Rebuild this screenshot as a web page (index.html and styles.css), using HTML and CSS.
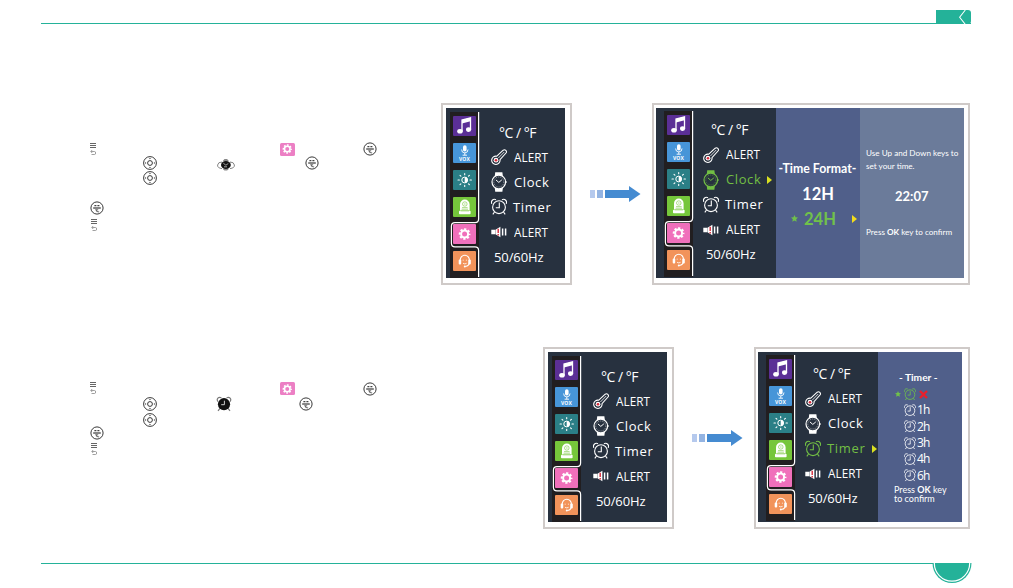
FILE: index.html
```html
<!DOCTYPE html>
<html lang="en">
<head>
  <meta charset="UTF-8" />
  <meta name="viewport" content="width=device-width, initial-scale=1.0" />
  <title>Clock and Timer</title>
  <link rel="stylesheet" href="styles.css">
</head>
<body>
  <!-- shared icons -->
  <svg class="defs">
    <symbol id="music" viewBox="0 0 23 20">
      <path d="M9 15V4l8.5-2.2v11.4" fill="none" stroke="#fff" stroke-width="1.3"/>
      <path d="M9 4l8.5-2.2v3.4L9 7.4z" fill="#fff"/>
      <ellipse cx="7" cy="15.3" rx="2.8" ry="2.3" fill="#fff"/><ellipse cx="15.6" cy="13.6" rx="2.6" ry="2.3" fill="#fff"/>
    </symbol>
    <symbol id="mic" viewBox="0 0 23 20">
      <rect x="10" y="2.3" width="3.6" height="6.2" rx="1.8" fill="#fff"/>
      <path d="M8.6 6.5q0 3.4 3.2 3.4T15 6.5M11.8 10v2.2M9.6 12.2h4.4" fill="none" stroke="#fff" stroke-width=".9"/>
    </symbol>
    <symbol id="sun" viewBox="0 0 23 20">
      <circle cx="11.7" cy="10" r="2.9" fill="none" stroke="#fff"/><path d="M11.7 7.1a2.9 2.9 0 0 1 0 5.8z" fill="#fff"/>
      <path d="M11.7 3.6v1.2M11.7 15.2v1.2M5 10h1.4M17 10h1.4M7 5.3l.9.9M15.5 13.8l.9.9M7 14.7l.9-.9M15.5 6.2l.9-.9" stroke="#fff" stroke-width="1.1" stroke-linecap="round"/>
    </symbol>
    <symbol id="lamp" viewBox="0 0 23 20">
      <path d="M7 13.6V7.4a4.8 4.9 0 0 1 9.6 0v6.2z" fill="#fff"/><rect x="6" y="13.8" width="11.6" height="3.4" rx=".8" fill="#fff"/>
      <path d="M9.5 7a2.3 2.2 0 1 1 4.6 0 2.3 2.2 0 1 1-4.6 0M11 7h1.6M9 10.6h5.6M8.6 12.2h6.4M7.6 13.9h8.4" fill="none" stroke="#76c63b" stroke-width=".6"/>
    </symbol>
    <symbol id="gear" viewBox="0 0 23 20">
      <circle cx="11.6" cy="10" r="3.5" fill="none" stroke="#fff" stroke-width="2"/>
      <circle cx="11.6" cy="10" r="4.9" fill="none" stroke="#fff" stroke-width="1.9" stroke-dasharray="2.2 1.65" stroke-dashoffset="1.1"/>
    </symbol>
    <symbol id="headset" viewBox="0 0 23 20">
      <path d="M7.2 10V9a4.6 4.8 0 0 1 9.2 0v1.5q0 4.8-4.2 5" fill="none" stroke="#fff" stroke-width="1.1"/>
      <rect x="5.7" y="8.6" width="2.5" height="4.8" rx="1" fill="#fff"/><rect x="15.3" y="8.6" width="2.5" height="4.8" rx="1" fill="#fff"/>
      <path d="M10.2 8.7v1M13.4 8.7v1M10 12.3q1.8 1.2 3.6 0" fill="none" stroke="#fff" stroke-width=".8"/><circle cx="11.8" cy="15.6" r="1" fill="#fff"/>
    </symbol>
    <symbol id="thermo" viewBox="0 0 16 20">
      <path d="M5.8 9.2l6.4-6a2 2 0 0 1 2.8 2.8l-6 6.6a4.2 4.2 0 1 1-3.2-3.4z" fill="none" stroke="currentColor" stroke-width="1.1"/>
      <path d="M7.4 11l5.8-6" stroke="currentColor" stroke-width=".8"/>
      <circle cx="5" cy="13.2" r="2.4" fill="#fff"/><circle cx="5" cy="13.2" r="1.3" fill="#d62839"/>
    </symbol>
    <symbol id="watch" viewBox="0 0 16 20">
      <path d="M4.4 4l.4-3h6l.4 3M4.4 16l.4 3h6l.4-3M4.8 2.4h6M4.8 17.6h6" fill="none" stroke="currentColor" stroke-width="1.3"/>
      <circle cx="7.8" cy="10" r="6.8" fill="none" stroke="currentColor" stroke-width="1.2"/>
      <circle cx="7.8" cy="10" r="5" fill="none" stroke="currentColor" stroke-width=".5" stroke-dasharray="1 1"/>
      <path d="M4.9 7.9l2.9 2.5 3-2.5M14.6 10h1.4" fill="none" stroke="currentColor" stroke-width="1"/>
    </symbol>
    <symbol id="alarm" viewBox="0 0 16 20">
      <circle cx="8" cy="10.2" r="6.4" fill="none" stroke="currentColor" stroke-width="1.1"/>
      <path d="M8.3 5.6v5.2H4.8M3.5 15L1.8 17.4M12.5 15l1.7 2.4M.9 6.8C-.6 4.3 2.2 1.2 5 2.7M15.1 6.8c1.5-2.5-1.3-5.6-4.1-4.1" fill="none" stroke="currentColor" stroke-width="1.1"/>
    </symbol>
    <symbol id="speaker" viewBox="0 0 16 20">
      <path d="M.3 7.7h3.8v4.6H.3zM4.4 7.7l5-2.9v10.4l-5-2.9z" fill="#fff"/>
      <path d="M7.2 6.8v4.2M7.2 12v1.5" stroke="#d62839" stroke-width="1.4"/><path d="M11.6 6.6v6.8M14.6 6.6v6.8" stroke="#fff" stroke-width="1.5"/>
    </symbol>
    <symbol id="outline" viewBox="0 0 30 166">
      <path d="M28.6 0v107q0 3.6-3.6 3.6H5q-3.6 0-3.6 3.6v17q0 3.6 3.6 3.6h20q3.6 0 3.6 3.6V165" fill="none" stroke="#fff" stroke-width="1.2"/>
    </symbol>
    <symbol id="star" viewBox="0 0 10 10"><path d="M5 0l1.5 3.2 3.5.4-2.6 2.4.7 3.6L5 7.9 1.9 9.6 2.6 6 0 3.6l3.5-.4z" fill="#70c14a"/></symbol>
    <symbol id="arrow" viewBox="0 0 51 16">
      <path d="M0 4h5v8H0z" fill="#b5c9ed"/><path d="M7 4h6v8H7z" fill="#94b4e2"/><path d="M15 4h24V0l11.5 8L39 16v-4H15z" fill="#458bd1"/>
    </symbol>
    <symbol id="menukey" viewBox="0 0 7 13">
      <path d="M0 .5h6M0 2.5h6M0 4.5h6" stroke="#666" stroke-width="1"/>
      <path d="M1 8.5h3.6q1 0 1 1.5t-1 1.5H1.5M2.2 7L.8 8.5 2.2 10" fill="none" stroke="#888" stroke-width=".8"/>
    </symbol>
    <symbol id="okkey" viewBox="0 0 14 14">
      <circle cx="7" cy="7" r="6.1" fill="none" stroke="#222" stroke-width=".9"/>
      <path d="M3.2 7h7.6" stroke="#111" stroke-width="1"/>
      <path d="M4.4 4.6h2M7.4 4.6h2" fill="none" stroke="#444" stroke-width="1.4"/>
      <path d="M5.2 8.8h3M6.6 8.8v1.6l2.6.6" fill="none" stroke="#444" stroke-width=".8"/>
    </symbol>
    <symbol id="navkey" viewBox="0 0 14 14">
      <circle cx="7" cy="7" r="6.4" fill="none" stroke="#222" stroke-width=".9"/><circle cx="7" cy="7" r="2.4" fill="none" stroke="#222" stroke-width=".9"/>
      <path d="M6.2 2.9L7 2.1l.8.8M6.2 11.1l.8.8.8-.8M2.9 6.2L2.1 7l.8.8M11.1 6.2l.8.8-.8.8" fill="none" stroke="#444" stroke-width=".8"/>
    </symbol>
    <symbol id="watchkey" viewBox="0 0 18 12">
      <path d="M5 3Q1 3 .6 6T5 9.6M13 3q4 0 4.4 3T13 9.6" fill="none" stroke="#777" stroke-width=".9"/>
      <path d="M7.5 0h2.6l2 2.2H5.5zM5.5 9.8h6.6l-2 1.8H7.5z" fill="#888"/><ellipse cx="8.9" cy="6" rx="4.9" ry="4" fill="#111"/>
      <path d="M6.3 4.2l2.6 2 2.4-1.7M7 7.8h3" fill="none" stroke="#ddd" stroke-width=".7"/>
    </symbol>
    <symbol id="alarmkey" viewBox="0 0 16 16">
      <path d="M2 5.6C0 3 2.6.2 5.4 1.8M14 5.6C16 3 13.4.2 10.6 1.8M4 12.4l-2 2.4M12 12.4l2 2.4" fill="none" stroke="#777" stroke-width="1.2"/>
      <circle cx="8" cy="8.2" r="6.1" fill="#111"/><path d="M8.4 4.7v4H5.2" fill="none" stroke="#ccc" stroke-width="1"/>
    </symbol>
  </svg>

  <header class="top">
    <div class="tag"><svg viewBox="0 0 34 14"><path d="M28.5 0L23 7l5.5 7" fill="none" stroke="#fff" stroke-width="1"/></svg></div>
  </header>

  <section class="guide guide-clock">
    <div class="steps">
      <svg class="k-menu c1"><use href="#menukey"/></svg>
      <span class="k-gear c4"><svg><use href="#gear"/></svg></span>
      <svg class="k-ok c5"><use href="#okkey"/></svg>
      <svg class="k-nav c2 r2"><use href="#navkey"/></svg>
      <svg class="k-watch c3 r2"><use href="#watchkey"/></svg>
      <svg class="k-ok k-late c4 r2"><use href="#okkey"/></svg>
      <svg class="k-nav c2 r3"><use href="#navkey"/></svg>
      <svg class="k-ok c1 r5"><use href="#okkey"/></svg>
      <svg class="k-menu k-last c1 r6"><use href="#menukey"/></svg>
    </div>
    <div class="frame">
      <div class="menu">
        <div class="rail">
          <i class="music"><svg><use href="#music"/></svg></i>
          <i class="vox"><svg><use href="#mic"/></svg><b>VOX</b></i>
          <i class="light"><svg><use href="#sun"/></svg></i>
          <i class="lamp"><svg><use href="#lamp"/></svg></i>
          <i class="gear"><svg><use href="#gear"/></svg></i>
          <i class="help"><svg><use href="#headset"/></svg></i>
          <svg class="outline"><use href="#outline"/></svg>
        </div>
        <ul>
          <li class="deg">°C / °F</li>
          <li><svg><use href="#thermo"/></svg><span class="alert">ALERT</span></li>
          <li><svg><use href="#watch"/></svg><span class="clock">Clock</span></li>
          <li><svg><use href="#alarm"/></svg><span class="timer">Timer</span></li>
          <li><svg><use href="#speaker"/></svg><span class="alert">ALERT</span></li>
          <li class="hz">50/60Hz</li>
        </ul>
      </div>
    </div>
    <svg class="arrow"><use href="#arrow"/></svg>
    <div class="frame frame-wide">
      <div class="menu inset">
        <div class="rail">
          <i class="music"><svg><use href="#music"/></svg></i>
          <i class="vox"><svg><use href="#mic"/></svg><b>VOX</b></i>
          <i class="light"><svg><use href="#sun"/></svg></i>
          <i class="lamp"><svg><use href="#lamp"/></svg></i>
          <i class="gear"><svg><use href="#gear"/></svg></i>
          <i class="help"><svg><use href="#headset"/></svg></i>
          <svg class="outline"><use href="#outline"/></svg>
        </div>
        <ul>
          <li class="deg">°C / °F</li>
          <li><svg><use href="#thermo"/></svg><span class="alert">ALERT</span></li>
          <li class="on"><svg><use href="#watch"/></svg><span class="clock">Clock</span><em></em></li>
          <li><svg><use href="#alarm"/></svg><span class="timer">Timer</span></li>
          <li><svg><use href="#speaker"/></svg><span class="alert">ALERT</span></li>
          <li class="hz">50/60Hz</li>
        </ul>
      </div>
      <div class="format">
        <h3>-Time Format-</h3>
        <p>12H</p>
        <p class="picked"><svg><use href="#star"/></svg>24H<em></em></p>
      </div>
      <div class="settime">
        <p>Use Up and Down keys to<br>set your time.</p>
        <strong>22:07</strong>
        <p class="press">Press <b>OK</b> key to confirm</p>
      </div>
    </div>
  </section>

  <section class="guide guide-timer">
    <div class="steps">
      <svg class="k-menu c1"><use href="#menukey"/></svg>
      <span class="k-gear c4"><svg><use href="#gear"/></svg></span>
      <svg class="k-ok c5"><use href="#okkey"/></svg>
      <svg class="k-nav c2 r2"><use href="#navkey"/></svg>
      <svg class="k-alarm c3 r2"><use href="#alarmkey"/></svg>
      <svg class="k-ok k-late c4 r2"><use href="#okkey"/></svg>
      <svg class="k-nav c2 r3"><use href="#navkey"/></svg>
      <svg class="k-ok c1 r4"><use href="#okkey"/></svg>
      <svg class="k-menu k-last c1 r5"><use href="#menukey"/></svg>
    </div>
    <div class="frame">
      <div class="menu">
        <div class="rail">
          <i class="music"><svg><use href="#music"/></svg></i>
          <i class="vox"><svg><use href="#mic"/></svg><b>VOX</b></i>
          <i class="light"><svg><use href="#sun"/></svg></i>
          <i class="lamp"><svg><use href="#lamp"/></svg></i>
          <i class="gear"><svg><use href="#gear"/></svg></i>
          <i class="help"><svg><use href="#headset"/></svg></i>
          <svg class="outline"><use href="#outline"/></svg>
        </div>
        <ul>
          <li class="deg">°C / °F</li>
          <li><svg><use href="#thermo"/></svg><span class="alert">ALERT</span></li>
          <li><svg><use href="#watch"/></svg><span class="clock">Clock</span></li>
          <li><svg><use href="#alarm"/></svg><span class="timer">Timer</span></li>
          <li><svg><use href="#speaker"/></svg><span class="alert">ALERT</span></li>
          <li class="hz">50/60Hz</li>
        </ul>
      </div>
    </div>
    <svg class="arrow"><use href="#arrow"/></svg>
    <div class="frame frame-timer">
      <div class="menu inset">
        <div class="rail">
          <i class="music"><svg><use href="#music"/></svg></i>
          <i class="vox"><svg><use href="#mic"/></svg><b>VOX</b></i>
          <i class="light"><svg><use href="#sun"/></svg></i>
          <i class="lamp"><svg><use href="#lamp"/></svg></i>
          <i class="gear"><svg><use href="#gear"/></svg></i>
          <i class="help"><svg><use href="#headset"/></svg></i>
          <svg class="outline"><use href="#outline"/></svg>
        </div>
        <ul>
          <li class="deg">°C / °F</li>
          <li><svg><use href="#thermo"/></svg><span class="alert">ALERT</span></li>
          <li><svg><use href="#watch"/></svg><span class="clock">Clock</span></li>
          <li class="on"><svg><use href="#alarm"/></svg><span class="timer">Timer</span><em></em></li>
          <li><svg><use href="#speaker"/></svg><span class="alert">ALERT</span></li>
          <li class="hz">50/60Hz</li>
        </ul>
      </div>
      <div class="hours">
        <h3>- Timer -</h3>
        <ol>
          <li class="off"><svg class="star"><use href="#star"/></svg><svg><use href="#alarm"/></svg><svg class="cross" viewBox="0 0 9 9"><path d="M1 1l7 7M8 1L1 8" stroke="#e8202c" stroke-width="2.4"/></svg></li>
          <li><svg><use href="#alarm"/></svg>1h</li>
          <li><svg><use href="#alarm"/></svg>2h</li>
          <li><svg><use href="#alarm"/></svg>3h</li>
          <li><svg><use href="#alarm"/></svg>4h</li>
          <li><svg><use href="#alarm"/></svg>6h</li>
        </ol>
        <p>Press <b>OK</b> key<br>to confirm</p>
      </div>
    </div>
  </section>

  <footer class="bottom">
    <svg viewBox="0 0 40 21"><path d="M.5 0a19.5 20 0 0 0 39 0z" fill="#24b299"/><path d="M2.3 0a17.7 18.2 0 0 0 35.4 0" fill="none" stroke="#fff" stroke-width="1.2"/></svg>
  </footer>
</body>
</html>
```
FILE: styles.css
```css
* {
  box-sizing: border-box;
}
body {
  width: 1013px;
  height: 588px;
  margin: 0;
  padding: 10px 42px 0 41px;
  overflow: hidden;
  background: #fff;
  color: #fff;
  font-family: "Open Sans", "Noto Sans", sans-serif;
  display: flex;
  flex-direction: column;
}
svg {
  display: block;
  flex: none;
}
.defs {
  position: absolute;
  width: 0;
  height: 0;
}
ul, ol, p, h3 {
  list-style: none;
  margin: 0;
  padding: 0;
}

/* page rules */
.top {
  height: 14px;
  flex: none;
  display: flex;
  justify-content: flex-end;
  border-bottom: 1px solid #24b299;
}
.tag {
  width: 35px;
  height: 14px;
  background: #24b299;
  border-radius: 0 3px 3px 0;
}
.bottom {
  margin-top: 34px;
  height: 21px;
  display: flex;
  justify-content: flex-end;
  background: linear-gradient(#24b299, #24b299) 0 0 / 892px 1px no-repeat;
}
.bottom svg {
  width: 40px;
  height: 21px;
  margin-right: -1px;
}

/* sections */
.guide {
  height: 182px;
  flex: none;
  display: flex;
  align-items: flex-start;
}
.guide-clock {
  margin-top: 79px;
}
.guide-timer {
  margin-top: 62px;
}
.steps {
  width: 351px;
  margin: 39px 0 0 49px;
  display: grid;
  grid-template-columns: 52.5px 74px 63.5px 83px 1fr;
  grid-template-rows: 14px 14px 15px 15px 15px 21px;
  align-items: center;
}
.guide-timer .steps {
  width: 453px;
  margin-top: 34.5px;
  grid-template-rows: 14px 17px 14px 13px 20px;
}
.c1 { grid-column: 1; }
.c2 { grid-column: 2; }
.c3 { grid-column: 3; }
.c4 { grid-column: 4; }
.c5 { grid-column: 5; }
.r2 { grid-row: 2; }
.r3 { grid-row: 3; }
.r4 { grid-row: 4; }
.r5 { grid-row: 5; }
.r6 { grid-row: 6; }
.k-menu { width: 7px; height: 13px; }
.k-last { margin-left: 1px; }
.k-ok, .k-nav { width: 14px; height: 14px; }
.k-late { margin-left: 25px; }
.guide-timer .k-late { margin-left: 18.5px; }
.k-watch { width: 18px; height: 12px; margin-top: 3px; }
.k-alarm { width: 16px; height: 16px; margin-left: -1px; }
.k-gear {
  width: 14.5px;
  height: 13px;
  background: #ec7fc4;
  border-radius: 1.5px;
  overflow: hidden;
}
.k-gear svg {
  width: 18.4px;
  height: 16px;
  margin: -1.5px 0 0 -2px;
}

.frame {
  width: 131px;
  height: 182px;
  padding: 3px;
  flex: none;
  display: flex;
  border: 2px solid #cfcac8;
}
.frame-wide {
  width: 318px;
  padding-left: 2px;
}
.frame-timer {
  width: 216px;
  padding-left: 2px;
}
.arrow {
  width: 51px;
  height: 16px;
  margin: 83px 11px 0 18px;
}

/* device menu */
.menu {
  width: 119px;
  height: 170px;
  flex: none;
  display: flex;
  background: #27313f;
}
.rail {
  position: relative;
  width: 29px;
  height: 166px;
  margin: 4px 0 0 4px;
  padding: 4px 0 0 3px;
  display: flex;
  flex-direction: column;
  gap: 7.1px;
  background: #211e20;
}
.rail i {
  width: 23px;
  height: 20px;
  flex: none;
  border-radius: 1px;
  font-style: normal;
}
.rail i svg {
  width: 23px;
  height: 20px;
}
.outline {
  position: absolute;
  left: 0;
  top: 0;
  width: 30px;
  height: 166px;
}
.music { background: #5b2f96; }
.vox { background: #4795d8; }
.light { background: #2b7f86; }
.lamp { background: #76c63b; }
.gear { background: #f070bb; }
.help { background: #f2935a; }
.vox b {
  display: block;
  margin-top: -8px;
  font-size: 5px;
  line-height: 8px;
  letter-spacing: .2px;
  text-align: center;
}
.menu ul {
  padding: 11.5px 0 0 12px;
}
.menu li {
  height: 25px;
  display: flex;
  align-items: center;
  font-size: 13px;
  line-height: 25px;
  white-space: nowrap;
}
.menu li svg {
  width: 16px;
  height: 20px;
  margin-right: 7px;
}
.menu .deg {
  padding-left: 8px;
  font-size: 14px;
  letter-spacing: -.5px;
}
.menu .hz {
  padding-left: 3px;
  letter-spacing: -.1px;
}
/* the device font is narrower in capitals */
.alert {
  transform: scaleX(.9);
  transform-origin: 0 50%;
  letter-spacing: .1px;
}
.clock { letter-spacing: .6px; }
.timer { letter-spacing: .7px; margin-left: -1px; }
.on { color: #72bf44; }
em {
  border: solid transparent;
  border-width: 4px 0 4px 5px;
  border-left-color: #d9e021;
}
.menu em {
  margin-left: 6px;
}
.inset {
  width: 120px;
}
.inset .rail {
  margin: 3px 0 0 8px;
}
.inset ul {
  padding: 9px 0 0 10px;
}

/* 12H / 24H */
.format {
  width: 84px;
  height: 170px;
  flex: none;
  padding-top: 50.5px;
  background: #505f8a;
  font-family: Lato, sans-serif;
  font-weight: bold;
  text-align: center;
}
.format h3 {
  margin-left: -1px;
  font-size: 12.3px;
  line-height: 20px;
  white-space: nowrap;
}
.format p {
  margin-top: 4px;
  font-size: 16.5px;
  line-height: 22px;
}
.format .picked {
  margin-top: 3px;
  padding-left: 15px;
  display: flex;
  align-items: center;
  color: #70c14a;
}
.picked svg {
  width: 7px;
  height: 7px;
  margin-right: 6px;
}
.picked em {
  margin-left: auto;
  margin-right: 3px;
  border-left-color: #f1dc1c;
}
.settime {
  width: 104px;
  height: 170px;
  flex: none;
  padding: 39px 0 0 6px;
  background: #6b7b9a;
  font-family: Lato, sans-serif;
  font-size: 8.15px;
  line-height: 12.5px;
  white-space: nowrap;
}
.settime strong {
  display: block;
  margin: 15px 0 0 29px;
  font-size: 13px;
  line-height: 18px;
}
.settime .press {
  margin-top: 21px;
}

/* timer hours */
.hours {
  width: 84px;
  height: 170px;
  flex: none;
  padding-top: 17px;
  background: #505f8a;
}
.hours h3 {
  padding-left: 21px;
  font-family: Lato, sans-serif;
  font-size: 10.2px;
  line-height: 17px;
}
.hours li {
  height: 16.3px;
  padding-left: 26px;
  display: flex;
  align-items: center;
  font-size: 12px;
  line-height: 16px;
  letter-spacing: -.8px;
}
.hours li svg {
  width: 12px;
  height: 15px;
  margin-right: 1px;
}
.hours .off {
  padding-left: 17px;
  color: #70c14a;
}
.hours li .star {
  width: 6px;
  height: 6px;
  margin-right: 3px;
}
.hours li .cross {
  width: 9px;
  height: 9px;
  margin-left: 2px;
}
.hours p {
  padding: 1px 0 0 16px;
  font-family: Lato, sans-serif;
  font-size: 9px;
  line-height: 9px;
}
```
